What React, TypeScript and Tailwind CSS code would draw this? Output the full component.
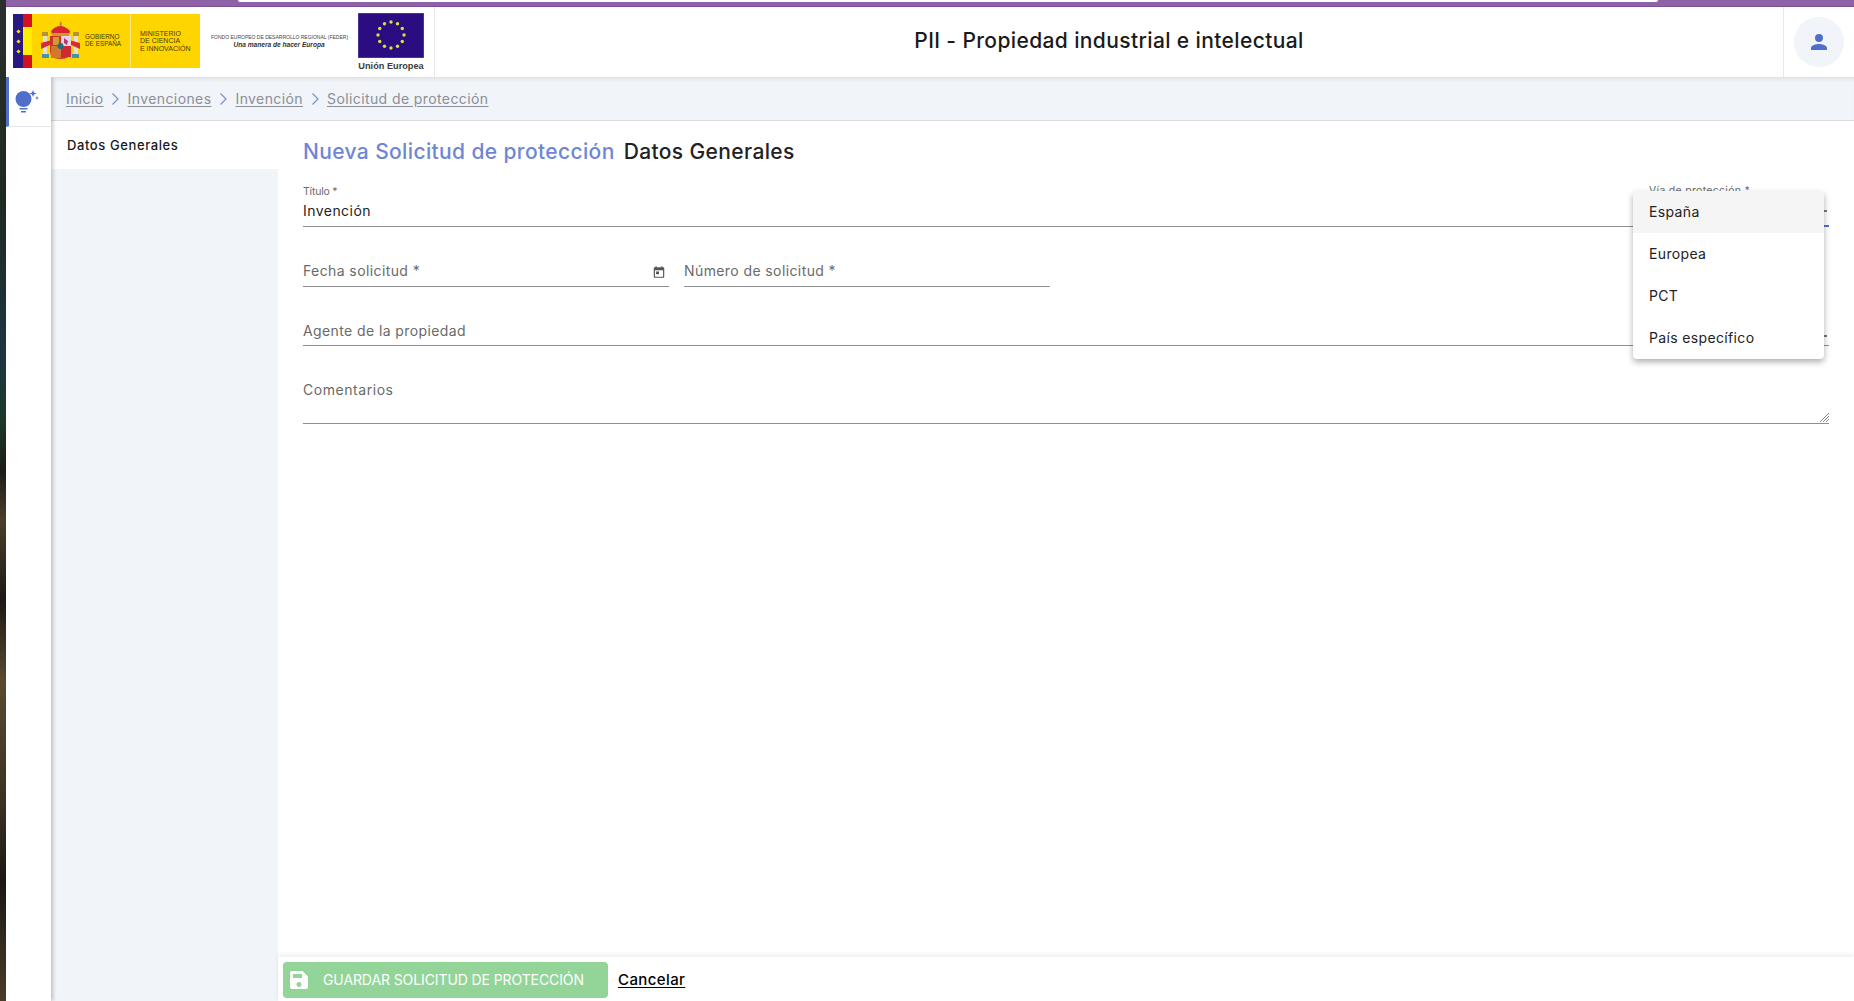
import React from "react";

const font = "font-['Inter','Noto_Sans',sans-serif]";

function Emblem() {
  return (
    <svg width="40" height="38" viewBox="0 0 40 38">
      <rect x="2" y="13" width="4" height="20" fill="#e4dfd0" />
      <rect x="33" y="13" width="4" height="20" fill="#e4dfd0" />
      <rect x="1" y="10" width="6" height="4" fill="#b9922f" />
      <rect x="32" y="10" width="6" height="4" fill="#b9922f" />
      <rect x="1" y="32" width="7" height="4" fill="#4a93a6" />
      <rect x="31" y="32" width="7" height="4" fill="#4a93a6" />
      <path d="M0 21 L11 18 L11 22 L0 27Z M39 21 L28 18 L28 22 L39 27Z" fill="#d22b3a" />
      <path d="M10 9 Q19 -1 29 9 L28 13 L11 13Z" fill="#d8262e" />
      <rect x="11" y="11" width="17" height="3" fill="#c99a2e" />
      <path d="M18.700 0h2v4h-2z" fill="#b9922f" />
      <path d="M9 14 H30 V29 Q30 37 19.500 37 Q9 37 9 29Z" fill="#c8352c" />
      <rect x="20" y="14" width="10" height="10" fill="#ecd3e0" />
      <rect x="10" y="24" width="10" height="12" fill="#d2772b" />
      <rect x="20" y="24" width="10" height="11" fill="#cf2a33" />
      <rect x="12" y="15" width="6" height="8" fill="#d79a2a" />
      <circle cx="19.500" cy="24" r="3" fill="#1f6f7e" />
      <path d="M23 16l4 3-1 4-3-2z" fill="#a53f7c" />
    </svg>
  );
}

function GovLogo() {
  return (
    <div className="flex h-[54px] w-[187px] shrink-0 bg-[#ffd500]">
      <div className="flex w-[10px] flex-col items-center justify-center gap-[7px] bg-[#2a1a80]">
        <span className="size-[3px] rotate-45 bg-[#ffe500]" />
        <span className="size-[3px] rotate-45 bg-[#ffe500]" />
        <span className="size-[3px] rotate-45 bg-[#ffe500]" />
      </div>
      <div className="flex w-[9px] flex-col">
        <div className="h-[13px] bg-[#d4121f]" />
        <div className="flex-1 bg-[#ffee00]" />
        <div className="h-[13px] bg-[#d4121f]" />
      </div>
      <div className="flex w-[98px] items-center gap-[4px] pl-[9px]">
        <Emblem />
        <div className="mb-[3px] whitespace-nowrap font-['Liberation_Sans',sans-serif] text-[6.400px] leading-[7px] text-[#4a3c08]">
          GOBIERNO
          <br />
          DE ESPAÑA
        </div>
      </div>
      <div className="flex flex-1 items-center border-l border-[#f5e58a] pl-[9px] font-['Liberation_Sans',sans-serif] text-[7px] leading-[7.500px] text-[#4a3c08]">
        <div className="whitespace-nowrap">
          MINISTERIO
          <br />
          DE CIENCIA
          <br />E INNOVACIÓN
        </div>
      </div>
    </div>
  );
}

function EuLogo() {
  const stars = Array.from({ length: 12 }, (_, i) => {
    const a = (i * Math.PI) / 6;
    return [33 + 13 * Math.sin(a), 22 - 13 * Math.cos(a)];
  });
  return (
    <div className="flex w-[66px] shrink-0 flex-col items-center">
      <svg width="66" height="45" viewBox="0 0 66 45" className="block">
        <rect width="66" height="45" fill="#2a0d80" stroke="#6a5aa8" strokeWidth="1" />
        {stars.map(([x, y], i) => (
          <circle key={i} cx={x} cy={y} r="1.700" fill="#d8e23a" />
        ))}
      </svg>
      <div className="mt-[3px] whitespace-nowrap font-['Liberation_Sans',sans-serif] text-[9.200px] font-bold leading-[11px] text-[#3c3c3c]">
        Unión Europea
      </div>
    </div>
  );
}

function Chevron() {
  return (
    <svg width="9" height="14" viewBox="0 0 9 14" className="mx-[7.500px] shrink-0">
      <path d="M1.500 1.500 7 7l-5.500 5.500" fill="none" stroke="#7b90d4" strokeWidth="1.200" />
    </svg>
  );
}

function Crumb({ children }: { children: React.ReactNode }) {
  return <a className="text-[#8b8f97] underline underline-offset-2">{children}</a>;
}

function Field({
  label,
  className,
  icon,
}: {
  label: string;
  className?: string;
  icon?: React.ReactNode;
}) {
  return (
    <div className={`flex h-[30px] items-center justify-between border-b border-[#8f8f8f] ${className ?? ""}`}>
      <span className="text-[14px] tracking-[0.4px] text-[#6a6a6a]">{label}</span>
      {icon}
    </div>
  );
}

export default function App() {
  return (
    <div className={`flex h-[1001px] w-[1854px] overflow-hidden bg-white ${font}`}>
      <div className="w-[6px] shrink-0 bg-[linear-gradient(180deg,#2b2f2b_0%,#1f2a22_20%,#1d3540_35%,#1a3a2a_42%,#1c1c18_47%,#4a3f2a_52%,#1c1a16_60%,#5a4a30_68%,#3b3222_80%,#1a1814_88%,#4a3d28_100%)]" />
      <div className="relative flex min-w-0 flex-1 flex-col">
        <div className="h-[7px] shrink-0 border-b border-[#7a4f96] bg-[#8f62a8] pl-[232px]">
          <div className="h-[2px] w-[1420px] rounded-b-[3px] bg-white" />
        </div>
        <header className="z-10 flex h-[70px] shrink-0 items-center bg-white">
          <div className="flex h-full w-[429px] shrink-0 items-center border-r border-[#e8e8e8] pb-[2px] pl-[7px]">
            <GovLogo />
            <div className="ml-[11px] w-[136px] shrink-0 text-center">
              <div className="whitespace-nowrap font-['Liberation_Sans',sans-serif] text-[5px] leading-[7px] text-[#444]">
                FONDO EUROPEO DE DESARROLLO REGIONAL (FEDER)
              </div>
              <div className="whitespace-nowrap font-['Liberation_Sans',sans-serif] text-[6.600px] font-bold italic leading-[8px] text-[#333]">
                Una manera de hacer Europa
              </div>
            </div>
            <div className="ml-[11px] mt-[2px]">
              <EuLogo />
            </div>
          </div>
          <h1 className="mb-[2px] flex-1 text-center text-[21px] font-medium tracking-[0.38px] text-[#1a1a1a]">
            PII - Propiedad industrial e intelectual
          </h1>
          <div className="flex h-full w-[71px] shrink-0 items-center justify-center border-l border-[#e8e8e8]">
            <div className="flex size-[50px] items-center justify-center rounded-full bg-[#f1f4f8]">
              <svg width="24" height="24" viewBox="0 0 24 24" fill="#4f6fcb">
                <path d="M12 12a4 4 0 1 0 0-8 4 4 0 0 0 0 8zm0 2c-2.700 0-8 1.300-8 4v2h16v-2c0-2.700-5.300-4-8-4z" />
              </svg>
            </div>
          </div>
        </header>
        <div className="flex min-h-0 flex-1">
          <nav className="z-[5] w-[45px] shrink-0 bg-white shadow-[2px_0_4px_rgba(0,0,0,0.22)]">
            <div className="flex h-[50px] items-center justify-center border-b border-[#e6e6e6] border-l-[3px] border-l-[#4f6fcb]">
              <svg width="26" height="26" viewBox="0 0 26 26" fill="#4f6fcb" className="mb-[2px] mr-[8px]">
                <circle cx="10.500" cy="11" r="8" />
                <rect x="6.500" y="20" width="8" height="1.500" />
                <rect x="8" y="23" width="5" height="1.500" />
                <path d="M20 2l1 2.500 2.500 1-2.500 1-1 2.500-1-2.500-2.500-1 2.500-1z" />
                <path d="M24 8l.6 1.400 1.400.6-1.400.6-.6 1.400-.6-1.400-1.400-.6 1.400-.6z" />
              </svg>
            </div>
          </nav>
          <div className="flex min-w-0 flex-1 flex-col">
            <div className="flex h-[44px] shrink-0 items-center border-b border-[#d8dbe0] bg-[#f1f4f8] pl-[15px] text-[14px] tracking-[0.4px] shadow-[inset_0_5px_5px_-4px_rgba(0,0,0,0.12)]">
              <Crumb>Inicio</Crumb>
              <Chevron />
              <Crumb>Invenciones</Crumb>
              <Chevron />
              <Crumb>Invención</Crumb>
              <Chevron />
              <Crumb>Solicitud de protección</Crumb>
            </div>
            <div className="flex min-h-0 flex-1">
              <aside className="w-[227px] shrink-0 bg-[#f1f4f8]">
                <div className="flex h-[48px] items-center bg-white pl-[16px] pt-[2px] text-[13px] font-medium tracking-[0.6px] text-[#1a1a1a]">
                  Datos Generales
                </div>
              </aside>
              <main className="flex min-w-0 flex-1 flex-col">
                <div className="flex-1 pl-[25px] pr-[25px] pt-[16px]">
                  <div className="flex h-[30px] items-center gap-[9px] text-[21px] font-medium tracking-[0.37px]">
                    <span className="text-[#6f86d6]">Nueva Solicitud de protección</span>
                    <span className="text-[#222]">Datos Generales</span>
                  </div>
                  <div className="mt-[18px] flex h-[42px] flex-col border-b border-[#8f8f8f]">
                    <span className="text-[10.500px] leading-[13px] tracking-[-0.2px] text-[#6a6a6a]">Título *</span>
                    <span className="mt-[4px] text-[14px] leading-[17px] tracking-[0.45px] text-[#222]">Invención</span>
                  </div>
                  <div className="mt-[30px] flex gap-[15px]">
                    <Field
                      label="Fecha solicitud *"
                      className="w-[366px] pb-[2px]"
                      icon={
                        <svg width="14" height="14" viewBox="0 0 24 24" fill="#555" className="mr-[3px] mt-[3px]">
                          <path d="M19 4h-1V2h-2v2H8V2H6v2H5a2 2 0 0 0-2 2v14a2 2 0 0 0 2 2h14a2 2 0 0 0 2-2V6a2 2 0 0 0-2-2zm0 16H5V9h14v11zM7 11h5v5H7z" />
                        </svg>
                      }
                    />
                    <Field label="Número de solicitud *" className="w-[366px] pb-[2px]" />
                  </div>
                  <Field label="Agente de la propiedad" className="mt-[29px]" />
                  <div className="relative mt-[31px] h-[47px] border-b border-[#8f8f8f]">
                    <span className="text-[14px] leading-[17px] tracking-[0.55px] text-[#6a6a6a]">Comentarios</span>
                    <svg width="10" height="10" viewBox="0 0 10 10" className="absolute bottom-[1px] right-0">
                      <path d="M1 10 10 1M4 10l6-6M7 10l3-3" stroke="#888" strokeWidth="1" />
                    </svg>
                  </div>
                </div>
                <footer className="flex h-[44px] shrink-0 items-center gap-[10px] pl-[5px] pt-[2px] shadow-[0_-2px_5px_rgba(0,0,0,0.08)]">
                  <button className="flex h-[36px] w-[325px] items-center rounded-[4px] bg-[#93d498] pb-[1px] pl-[7px] text-[14px] tracking-[-0.1px] text-white">
                    <svg width="18" height="18" viewBox="0 0 18 18" fill="#fff" className="shrink-0">
                      <path fillRule="evenodd" d="M2 0h10.500L18 5.500V16a2 2 0 0 1-2 2H2a2 2 0 0 1-2-2V2a2 2 0 0 1 2-2zm1 3v4h9V3zm6 8a2.500 2.500 0 1 0 0 5 2.500 2.500 0 0 0 0-5z" />
                    </svg>
                    <span className="ml-[15px] whitespace-nowrap">GUARDAR SOLICITUD DE PROTECCIÓN</span>
                  </button>
                  <a className="text-[15px] font-medium tracking-[0.4px] text-black underline underline-offset-2">Cancelar</a>
                </footer>
              </main>
            </div>
          </div>
        </div>

        <span className="absolute left-[1643px] top-[184px] text-[10.500px] leading-[13px] tracking-[0.3px] text-[#6a6a6a]">
          Vía de protección <span className="text-[#4f6fcb]">*</span>
        </span>
        <div className="absolute left-[1818px] top-[225px] h-[2px] w-[5px] bg-[#4f6fcb]" />
        <div className="absolute left-[1818px] top-[210px] h-[2px] w-[3px] bg-[#777]" />
        <div className="absolute left-[1818px] top-[335px] h-[2px] w-[3px] bg-[#777]" />
        <div className="absolute left-[1627px] top-[191px] z-20 w-[191px] overflow-hidden rounded-[4px] bg-white text-[14px] tracking-[0.35px] text-[#222] shadow-[0_3px_6px_rgba(0,0,0,0.32)]">
          {["España", "Europea", "PCT", "País específico"].map((t, i) => (
            <div key={t} className={`flex h-[42px] items-center pb-[2px] pl-[16px] ${i === 0 ? "bg-[#f5f5f5]" : ""}`}>
              {t}
            </div>
          ))}
        </div>
      </div>
    </div>
  );
}
